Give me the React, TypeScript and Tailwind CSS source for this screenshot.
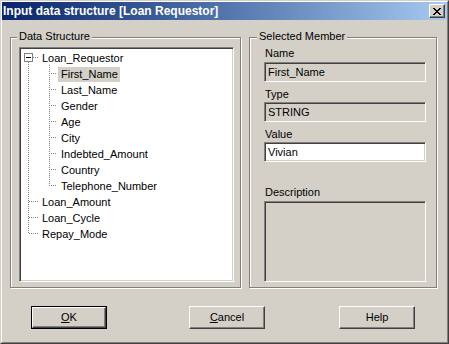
import React from "react";

const font = { fontFamily: '"Liberation Sans", Arial, sans-serif' };

function dotsV(x: number, y1: number, y2: number, key: string) {
  const out: React.ReactNode[] = [];
  for (let y = y1; y <= y2; y++) {
    if ((x + y) % 2 === 0) out.push(<rect key={key + y} x={x} y={y} width={1} height={1} fill="#808080" />);
  }
  return out;
}
function dotsH(y: number, x1: number, x2: number, key: string) {
  const out: React.ReactNode[] = [];
  for (let x = x1; x <= x2; x++) {
    if ((x + y) % 2 === 0) out.push(<rect key={key + x} x={x} y={y} width={1} height={1} fill="#808080" />);
  }
  return out;
}

const CloseGlyph = () => {
  const rows = ["XX....XX", ".XX..XX.", "..XXXX..", "...XX...", "..XXXX..", ".XX..XX.", "XX....XX"];
  const rects: React.ReactNode[] = [];
  rows.forEach((r, y) =>
    r.split("").forEach((c, x) => {
      if (c === "X") rects.push(<rect key={`${x}-${y}`} x={x} y={y} width={1} height={1} fill="#000" />);
    })
  );
  return (
    <svg width={8} height={7} viewBox="0 0 8 7" shapeRendering="crispEdges">
      {rects}
    </svg>
  );
};

const Sunken = "border border-t-[#808080] border-l-[#808080] border-b-white border-r-white shadow-[inset_1px_1px_0_#404040,inset_-1px_-1px_0_#d4d0c8]";
const Raised = "border border-t-white border-l-white border-r-[#404040] border-b-[#404040] shadow-[inset_-1px_-1px_0_#808080]";
const Etched = "border border-[#808080] shadow-[1px_1px_0_#fff,inset_1px_1px_0_#fff]";

const children = ["First_Name", "Last_Name", "Gender", "Age", "City", "Indebted_Amount", "Country", "Telephone_Number"];
const tops = ["Loan_Amount", "Loan_Cycle", "Repay_Mode"];

function TreeLines() {
  const els: React.ReactNode[] = [];
  els.push(...dotsV(8, 14, 185, "v0-"));
  els.push(...dotsH(9, 13, 18, "h0-"));
  [153, 169, 185].forEach((y, i) => els.push(...dotsH(y, 9, 18, `ht${i}-`)));
  els.push(...dotsV(29, 17, 137, "v1-"));
  for (let i = 0; i < 8; i++) els.push(...dotsH(25 + 16 * i, 30, 36, `hc${i}-`));
  return (
    <svg className="absolute left-0 top-0" width={211} height={231} shapeRendering="crispEdges">
      {els}
      <rect x={4} y={5} width={9} height={9} fill="#808080" />
      <rect x={5} y={6} width={7} height={7} fill="#fff" />
      <rect x={6} y={9} width={5} height={1} fill="#000" />
    </svg>
  );
}

function Field({ value, white }: { value?: string; white?: boolean }) {
  return (
    <div className={`${Sunken} w-[162px] h-[20px] ${white ? "bg-white" : "bg-[#d4d0c8]"} flex items-center pl-[3px] text-[11px] text-black`}>
      {value}
    </div>
  );
}

function Btn({ children, isDefault, ml }: { children: React.ReactNode; isDefault?: boolean; ml: string }) {
  if (isDefault) {
    return (
      <div className={`${ml} w-[76px] h-[23px] border border-black`}>
        <div className={`${Raised} w-full h-full flex items-center justify-center text-[11px] text-black`}>{children}</div>
      </div>
    );
  }
  return (
    <div className={`${ml} ${Raised} w-[76px] h-[23px] flex items-center justify-center text-[11px] text-black`}>{children}</div>
  );
}

export default function App() {
  return (
    <div style={font} className="w-[449px] h-[344px] bg-[#d4d0c8] border border-t-[#d4d0c8] border-l-[#d4d0c8] border-r-[#404040] border-b-[#404040] select-none">
      <div className="h-full border border-t-white border-l-white border-r-[#808080] border-b-[#808080] flex flex-col">
        {/* Title bar */}
        <div className="h-[18px] flex items-center bg-gradient-to-r from-[#0a246a] to-[#a6caf0]">
          <div className="pl-[1px] text-white font-bold text-[12px] leading-[18px] flex-1">Input data structure [Loan Requestor]</div>
          <div className={`${Raised} bg-[#d4d0c8] w-[16px] h-[14px] mr-[2px] flex items-center justify-center`}>
            <CloseGlyph />
          </div>
        </div>

        {/* Groups */}
        <div className="flex mt-[17px] pl-[8px]">
          <div className={`${Etched} relative w-[231px] h-[251px]`}>
            <div className="absolute left-[6px] top-[-8px] px-[2px] bg-[#d4d0c8] text-[11px] leading-[13px] text-black">Data Structure</div>
            <div className={`${Sunken} ml-[8px] mt-[9px] w-[215px] h-[235px] bg-white`}>
              <div className="relative w-[211px] h-[231px] pt-[2px] text-[11px] text-black">
                <TreeLines />
                <div className="h-[16px] flex items-center pl-[22px]">Loan_Requestor</div>
                {children.map((c, i) => (
                  <div key={c} className="h-[16px] flex items-end pl-[38px]">
                    <span className={`h-[15px] leading-[15px] pl-[3px] pr-[2px] ${i === 0 ? "bg-[#d4d0c8]" : ""}`}>{c}</span>
                  </div>
                ))}
                {tops.map((c) => (
                  <div key={c} className="h-[16px] flex items-center pl-[22px]">{c}</div>
                ))}
              </div>
            </div>
          </div>

          <div className={`${Etched} relative ml-[8px] w-[188px] h-[251px] pl-[14px] flex flex-col text-[11px] text-black`}>
            <div className="absolute left-[7px] top-[-8px] px-[2px] bg-[#d4d0c8] leading-[13px]">Selected Member</div>
            <div className="mt-[9px] h-[13px] leading-[13px] pl-[1px]">Name</div>
            <div className="mt-[2px]"><Field value="First_Name" /></div>
            <div className="mt-[6px] h-[13px] leading-[13px] pl-[1px]">Type</div>
            <div className="mt-[1px]"><Field value="STRING" /></div>
            <div className="mt-[6px] h-[13px] leading-[13px] pl-[1px]">Value</div>
            <div className="mt-[1px]"><Field value="Vivian" white /></div>
            <div className="mt-[24px] h-[13px] leading-[13px] pl-[1px]">Description</div>
            <div className={`${Sunken} mt-[2px] w-[162px] h-[81px] bg-[#d4d0c8]`} />
          </div>
        </div>

        {/* Buttons */}
        <div className="flex mt-[18px]">
          <Btn isDefault ml="ml-[29px]"><span><u className="underline-offset-1">O</u>K</span></Btn>
          <Btn ml="ml-[82px]"><span><u className="underline-offset-1">C</u>ancel</span></Btn>
          <Btn ml="ml-[74px]">Help</Btn>
        </div>
      </div>
    </div>
  );
}
